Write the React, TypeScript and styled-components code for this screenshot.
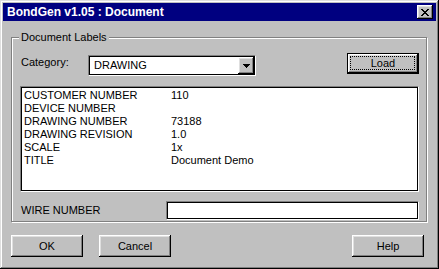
import React from "react";
import styled, { createGlobalStyle } from "styled-components";

const Global = createGlobalStyle`
  html, body { margin: 0; padding: 0; background: #c0c0c0; }
  * { box-sizing: border-box; }
`;

const Window = styled.div`
  width: 439px;
  height: 269px;
  background: #c0c0c0;
  padding: 3px;
  display: flex;
  flex-direction: column;
  font-family: "Liberation Sans", Arial, sans-serif;
  font-size: 11px;
  color: #000;
  box-shadow: inset -1px -1px #000, inset 1px 1px #dfdfdf, inset -2px -2px #808080, inset 2px 2px #fff;
`;

const TitleBar = styled.div`
  height: 18px;
  background: #000080;
  display: flex;
  align-items: center;
  justify-content: space-between;
  padding: 0 3px 0 4px;
`;

const Title = styled.span`
  color: #fff;
  font-weight: bold;
  font-size: 12px;
  line-height: 14px;
`;

const RaisedBevel = `
  background: #c0c0c0;
  box-shadow: inset -1px -1px #000, inset 1px 1px #fff, inset -2px -2px #808080, inset 2px 2px #dfdfdf;
`;

const CloseBtn = styled.div`
  ${RaisedBevel}
  width: 16px;
  height: 14px;
  display: flex;
  align-items: center;
  justify-content: center;
`;

const Body = styled.div`
  display: flex;
  flex-direction: column;
  padding: 16px 9px 0 8px;
`;

const GroupBox = styled.div`
  position: relative;
  height: 185px;
  border: 1px solid #808080;
  box-shadow: inset 1px 1px #fff, 1px 1px #fff;
  padding: 15px 7px 0 8px;
  display: flex;
  flex-direction: column;
`;

const Legend = styled.span`
  position: absolute;
  top: -7px;
  left: 7px;
  padding: 0 2px;
  background: #c0c0c0;
  line-height: 13px;
`;

const TopRow = styled.div`
  display: flex;
  align-items: flex-start;
  height: 21px;
`;

const Label = styled.span<{ $w: number; $mt: number }>`
  width: ${(p) => p.$w}px;
  margin-top: ${(p) => p.$mt}px;
  padding-left: 1px;
  line-height: 13px;
  flex-shrink: 0;
`;

const Sunken = `
  background: #fff;
  border: 1px solid;
  border-color: #808080 #fff #fff #808080;
  box-shadow: inset 0 0 0 1px #000;
`;

const Combo = styled.div`
  ${Sunken}
  width: 168px;
  height: 21px;
  margin-top: 2px;
  padding: 2px 2px 2px 5px;
  display: flex;
  align-items: center;
  justify-content: space-between;
`;

const ComboText = styled.span`
  line-height: 13px;
`;

const DropBtn = styled.div`
  ${RaisedBevel}
  width: 16px;
  height: 17px;
  margin-right: -1px;
  display: flex;
  align-items: center;
  justify-content: center;
`;

const Spacer = styled.div`
  flex: 1;
`;

const Button = styled.div<{ $default?: boolean }>`
  ${RaisedBevel}
  width: 72px;
  height: ${(p) => (p.$default ? 21 : 22)}px;
  display: flex;
  align-items: center;
  justify-content: center;
  position: relative;
  line-height: 13px;
  ${(p) =>
    p.$default
      ? `border: 1px solid #000;
         box-shadow: inset -1px -1px #000, inset 1px 1px #fff, inset -2px -2px #808080, inset 2px 2px #dfdfdf;`
      : ""}
`;

const Focus = styled.span`
  position: absolute;
  inset: 2px 3px 3px 2px;
  border: 1px dotted #000;
`;

const ListBox = styled.div`
  ${Sunken}
  margin-top: 12px;
  height: 106px;
  padding: 2px 3px;
  display: grid;
  grid-template-columns: 147px 1fr;
  grid-auto-rows: 13px;
  align-content: start;
  line-height: 13px;
`;

const WireRow = styled.div`
  margin-top: 9px;
  display: flex;
  align-items: center;
`;

const Input = styled.div`
  ${Sunken}
  flex: 1;
  height: 19px;
`;

const ButtonRow = styled.div`
  display: flex;
  gap: 16px;
  padding: 13px 12px 0 8px;
`;

const rows: [string, string][] = [
  ["CUSTOMER NUMBER", "110"],
  ["DEVICE NUMBER", ""],
  ["DRAWING NUMBER", "73188"],
  ["DRAWING REVISION", "1.0"],
  ["SCALE", "1x"],
  ["TITLE", "Document Demo"],
];

export default function App() {
  return (
    <>
      <Global />
      <Window>
        <TitleBar>
          <Title>BondGen v1.05 : Document</Title>
          <CloseBtn>
            <svg width="8" height="7" viewBox="0 0 8 7" shapeRendering="crispEdges">
              <path d="M0 0h2v1h-2zM6 0h2v1h-2zM1 1h2v1h-2zM5 1h2v1h-2zM2 2h4v1h-4zM3 3h2v1h-2zM2 4h4v1h-4zM1 5h2v1h-2zM5 5h2v1h-2zM0 6h2v1h-2zM6 6h2v1h-2z" fill="#000" />
            </svg>
          </CloseBtn>
        </TitleBar>
        <Body>
          <GroupBox>
            <Legend>Document Labels</Legend>
            <TopRow>
              <Label $w={68} $mt={3}>Category:</Label>
              <Combo>
                <ComboText>DRAWING</ComboText>
                <DropBtn>
                  <svg width="7" height="4" viewBox="0 0 7 4" shapeRendering="crispEdges">
                    <path d="M0 0h7v1h-7zM1 1h5v1h-5zM2 2h3v1h-3zM3 3h1v1h-1z" fill="#000" />
                  </svg>
                </DropBtn>
              </Combo>
              <Spacer />
              <Button $default>
                <Focus />
                Load
              </Button>
            </TopRow>
            <ListBox>
              {rows.map(([k, v]) => (
                <React.Fragment key={k}>
                  <span>{k}</span>
                  <span>{v}</span>
                </React.Fragment>
              ))}
            </ListBox>
            <WireRow>
              <Label $w={146} $mt={0}>WIRE NUMBER</Label>
              <Input />
            </WireRow>
          </GroupBox>
        </Body>
        <ButtonRow>
          <Button>OK</Button>
          <Button>Cancel</Button>
          <Spacer />
          <Button>Help</Button>
        </ButtonRow>
      </Window>
    </>
  );
}
